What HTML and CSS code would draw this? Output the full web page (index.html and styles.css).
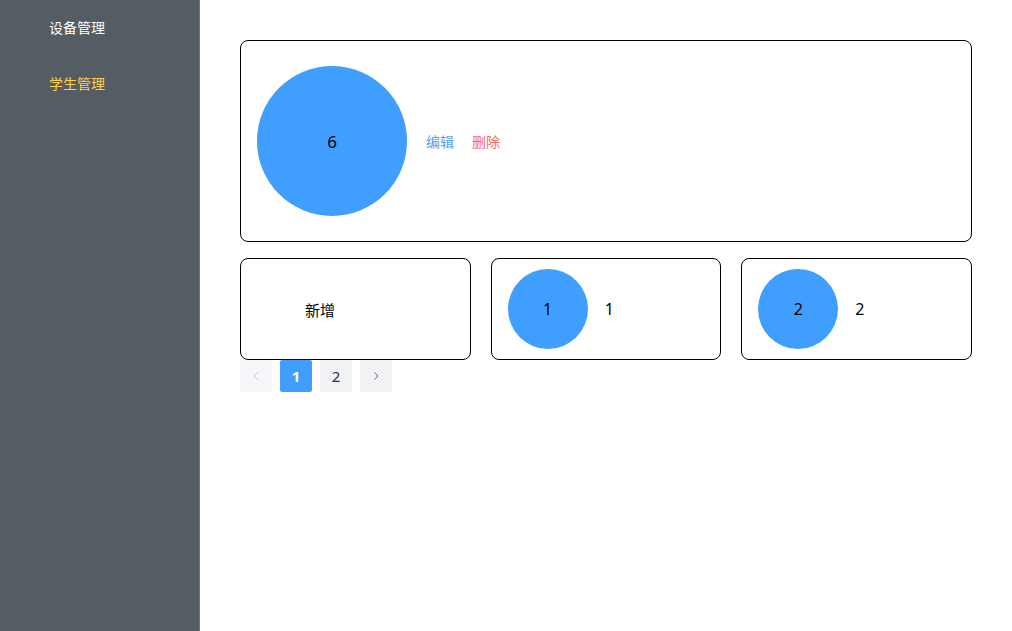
FILE: index.html
```html
<!DOCTYPE html>
<html lang="zh-CN">
<head>
<meta charset="utf-8">
<title>管理</title>
<link rel="stylesheet" href="styles.css">
</head>
<body>
<div class="layout">
  <aside class="sidebar">
    <ul class="menu">
      <li class="menu-item">设备管理</li>
      <li class="menu-item active">学生管理</li>
    </ul>
  </aside>
  <main class="main">
    <div class="card card-big">
      <div class="circle circle-big">6</div>
      <div class="actions">
        <span class="link link-edit">编辑</span>
        <span class="link link-del">删除</span>
      </div>
    </div>
    <div class="grid">
      <div class="card card-small card-add">新增</div>
      <div class="card card-small">
        <div class="circle circle-small">1</div>
        <span class="label">1</span>
      </div>
      <div class="card card-small">
        <div class="circle circle-small">2</div>
        <span class="label">2</span>
      </div>
    </div>
    <div class="pager">
      <button class="pg pg-prev" disabled>
        <svg width="12" height="12" viewBox="0 0 12 12"><path d="M7.5 2.5 L4 6 L7.5 9.5" fill="none" stroke="currentColor" stroke-width="1"/></svg>
      </button>
      <button class="pg pg-active">1</button>
      <button class="pg">2</button>
      <button class="pg pg-next">
        <svg width="12" height="12" viewBox="0 0 12 12"><path d="M4.5 2.5 L8 6 L4.5 9.5" fill="none" stroke="currentColor" stroke-width="1"/></svg>
      </button>
    </div>
  </main>
</div>
</body>
</html>
```
FILE: styles.css
```css
html, body {
  margin: 0;
  padding: 0;
  height: 100%;
  background: #fff;
  font-family: "Noto Sans", "Noto Sans CJK SC", sans-serif;
  font-size: 14px;
  color: #000;
}
.layout {
  display: flex;
  height: 100vh;
}
.sidebar {
  width: 199px;
  flex: none;
  background: #545c64;
  border-right: 1px solid #6c737a;
}
.menu {
  list-style: none;
  margin: 0;
  padding: 0;
}
.menu-item {
  height: 56px;
  line-height: 54px;
  padding-left: 49px;
  color: #fff;
  font-size: 14px;
  font-family: "Noto Sans CJK SC", sans-serif;
}
.menu-item.active {
  color: #ffd04b;
}
.main {
  flex: 1;
  padding: 40px;
  min-width: 0;
}
.card {
  border: 1px solid #000;
  border-radius: 8px;
  box-sizing: border-box;
  display: flex;
  align-items: center;
  padding-left: 16px;
}
.card-big {
  height: 202px;
}
.circle {
  border-radius: 50%;
  background: #409eff;
  display: flex;
  align-items: center;
  justify-content: center;
  flex: none;
  font-size: 16px;
  color: #000;
}
.circle-big {
  width: 150px;
  height: 150px;
  font-size: 17px;
}
.circle-small {
  width: 80px;
  height: 80px;
}
.actions {
  margin-left: 19px;
  display: flex;
  gap: 18px;
  font-family: "Noto Sans CJK SC", sans-serif;
}
.link-edit { color: #5a9cf8; }
.link-del { color: #f56c6c; }
.grid {
  margin-top: 16px;
  display: grid;
  grid-template-columns: repeat(3, 1fr);
  gap: 20px;
}
.card-small {
  height: 102px;
}
.card-add {
  padding-left: 64px;
  font-size: 15px;
  font-family: "Noto Sans CJK SC", sans-serif;
}
.label {
  margin-left: 17px;
  font-size: 16px;
}
.pager {
  display: flex;
  gap: 8px;
}
.pg {
  width: 32px;
  height: 32px;
  border: none;
  border-radius: 2px;
  background: #f0f2f5;
  color: #303133;
  font-family: "Noto Sans", sans-serif;
  font-size: 15px;
  padding: 0;
  display: flex;
  align-items: center;
  justify-content: center;
}
.pg-prev {
  background: #f5f7fa;
  color: #c0c4cc;
}
.pg-next {
  color: #606266;
}
.pg-active {
  background: #409eff;
  color: #fff;
  font-weight: 700;
}
```
